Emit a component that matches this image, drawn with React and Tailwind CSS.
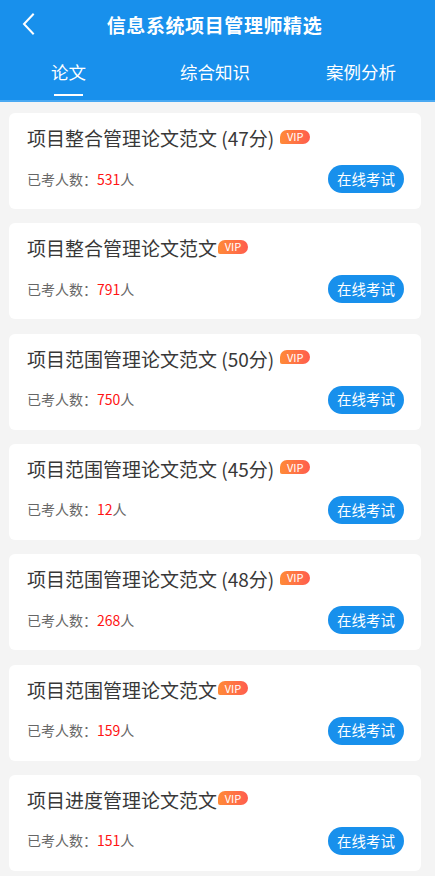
import React from "react";

const papers = [
  { title: "项目整合管理论文范文 (47分)", count: 531 },
  { title: "项目整合管理论文范文", count: 791 },
  { title: "项目范围管理论文范文 (50分)", count: 750 },
  { title: "项目范围管理论文范文 (45分)", count: 12 },
  { title: "项目范围管理论文范文 (48分)", count: 268 },
  { title: "项目范围管理论文范文", count: 159 },
  { title: "项目进度管理论文范文", count: 151 },
];

const font = { fontFamily: '"Noto Sans CJK SC", "Noto Sans", sans-serif' };

/* ------------------------------------------------------------------ */
/*  @ Header with back arrow + tabs
/* ------------------------------------------------------------------ */
const Header = () => {
  return (
    <div className="bg-[#1890ec] border-b-2 border-[#4aa9f2] text-white">
      <div className="relative h-[48px] flex items-center justify-center">
        <button className="absolute left-[21px] top-[13px] w-[14px] h-[22px] flex items-center justify-center">
          <svg width="13" height="22" viewBox="0 0 13 22" fill="none">
            <path d="M11 1.5 L2 11 L11 20.5" stroke="white" strokeWidth="2" strokeLinecap="square" />
          </svg>
        </button>
        <h1 className="text-[19px] font-bold tracking-[0.6px] leading-none pr-[6px]">
          信息系统项目管理师精选
        </h1>
      </div>
      <div className="h-[52px] flex pl-[51px] text-[17.5px]">
        <div className="flex flex-col items-center pt-[12px]">
          <span className="leading-[24px]">论文</span>
          <span className="mt-[10px] w-[29px] h-[2px] bg-white"></span>
        </div>
        <div className="ml-[94px] pt-[12px] leading-[24px]">综合知识</div>
        <div className="ml-[76px] pt-[12px] leading-[24px]">案例分析</div>
      </div>
    </div>
  );
};

/* ------------------------------------------------------------------ */
/*  @ VIP badge
/* ------------------------------------------------------------------ */
const VipBadge = ({ after }) => (
  <span
    className={`${after ? "ml-[6px]" : "ml-[1px]"} -mt-[3px] inline-flex items-center justify-center h-[14px] w-[30px] rounded-[7px] rounded-bl-[2px] bg-gradient-to-r from-[#ff8a36] to-[#ff5c4d] text-white text-[11px] leading-none`}
  >
    VIP
  </span>
);

/* ------------------------------------------------------------------ */
/*  @ Paper card
/* ------------------------------------------------------------------ */
const PaperCard = ({ title, count }) => {
  return (
    <div className="h-[96px] bg-white rounded-[6px] pl-[18px] pr-[17px] pt-[13px]">
      <div className="flex items-center h-[24px]">
        <span className="text-[19px] leading-[24px] text-[#383838]">{title}</span>
        <VipBadge after={title.endsWith(")")} />
      </div>
      <div className="mt-[15px] flex items-center justify-between h-[28px]">
        <span className="text-[14px] text-[#666666]">
          已考人数：<span className="text-[#ff1414]">{count}</span>人
        </span>
        <button className="h-[28px] w-[76px] rounded-full bg-[#1890ec] text-white text-[14.5px] leading-none">
          在线考试
        </button>
      </div>
    </div>
  );
};

export default function App() {
  return (
    <div className="w-[435px] h-[876px] overflow-hidden bg-[#f4f4f4]" style={font}>
      <Header />
      <div className="flex flex-col gap-[14.33px] pl-[9px] pr-[14px] pt-[11px]">
        {papers.map((p, i) => (
          <PaperCard key={i} title={p.title} count={p.count} />
        ))}
      </div>
    </div>
  );
}
